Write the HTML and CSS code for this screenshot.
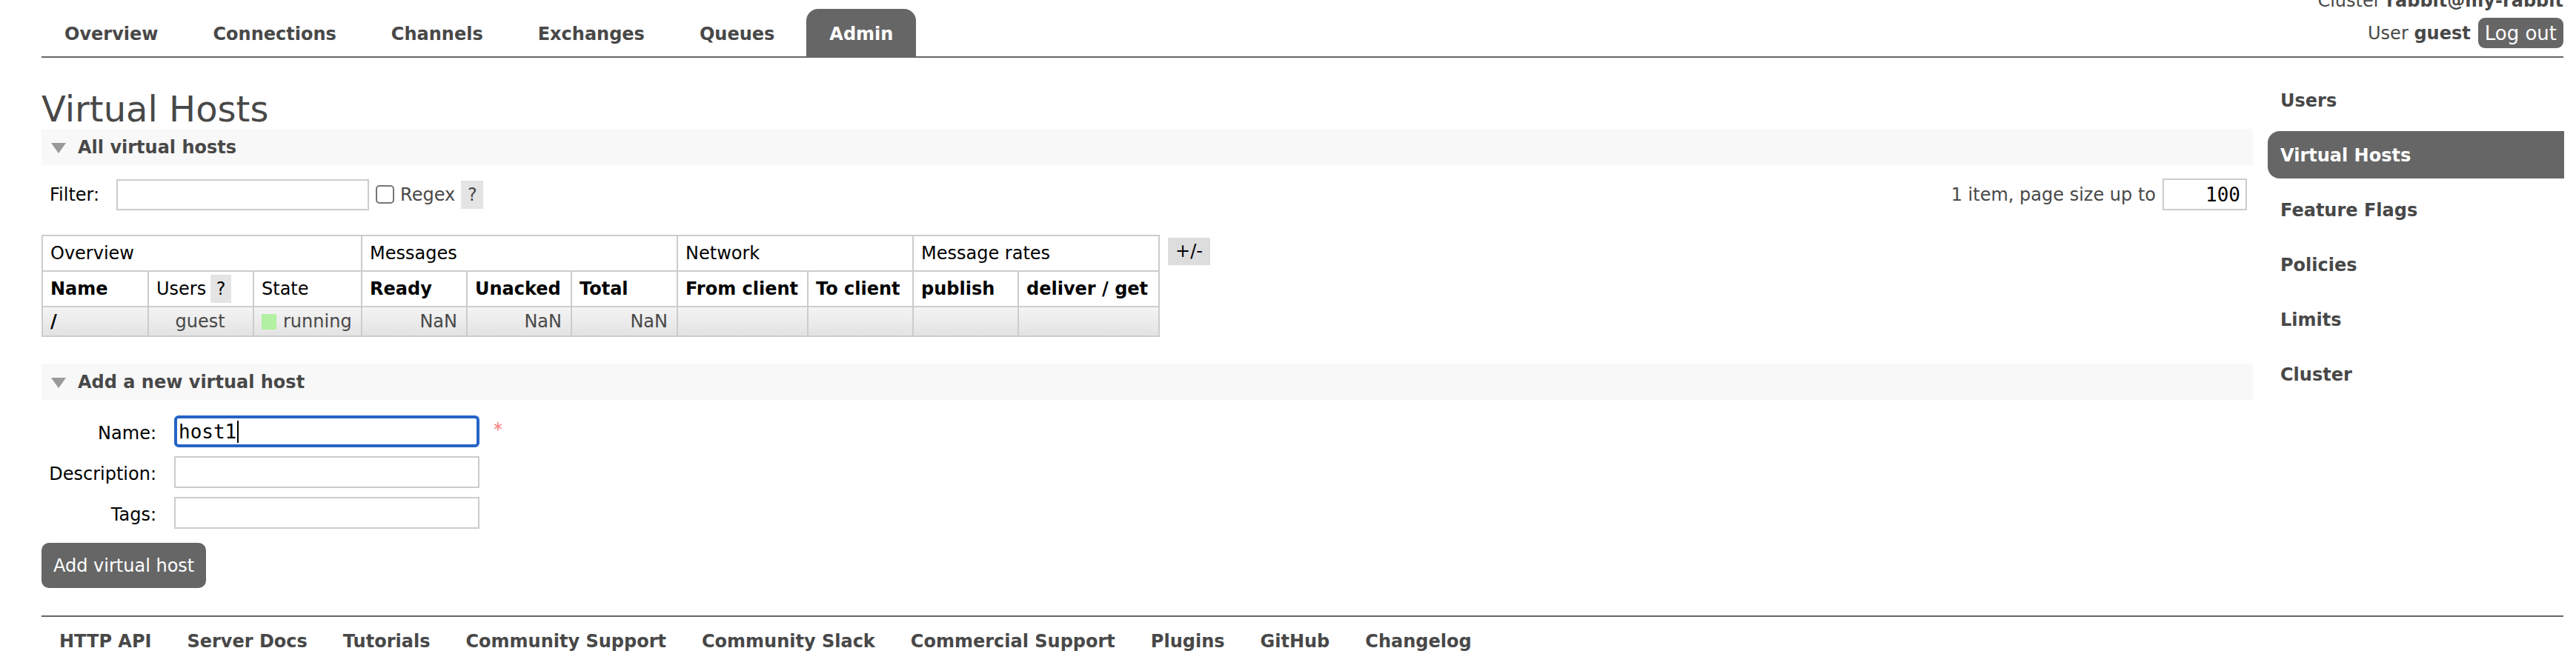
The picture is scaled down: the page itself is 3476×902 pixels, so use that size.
FILE: index.html
```html
<!DOCTYPE html>
<html lang="en">
<head>
<meta charset="utf-8">
<title>RabbitMQ Management</title>
<link rel="stylesheet" href="styles.css">
</head>
<body>
<div class="header">
  <ul class="menu">
    <li><a href="#">Overview</a></li>
    <li><a href="#">Connections</a></li>
    <li><a href="#">Channels</a></li>
    <li><a href="#">Exchanges</a></li>
    <li><a href="#">Queues</a></li>
    <li><a href="#" class="selected">Admin</a></li>
  </ul>
  <div class="topnav">
    <div class="tn-cluster">Cluster <b>rabbit@my-rabbit</b></div>
    <div class="tn-user"><span>User <b>guest</b></span><button class="logout" type="button">Log out</button></div>
  </div>
</div>

<div class="page">
  <div class="main">
    <h1 class="title">Virtual Hosts</h1>

    <div class="section">
      <h2 class="sec-title"><svg class="arrow" viewBox="0 0 20 14"><polygon points="0,0 20,0 10,14" fill="#999"/></svg>All virtual hosts</h2>
      <div class="filter-row">
        <div class="filter-left">
          <span class="lbl">Filter:</span>
          <input class="filter-input" type="text">
          <input class="chk" type="checkbox">
          <span>Regex</span>
          <span class="help">?</span>
        </div>
        <div class="filter-right">
          <span>1 item, page size up to</span>
          <input class="pagesize" type="text" value="100">
        </div>
      </div>

      <div class="table-wrap">
        <div class="vtable">
          <div class="c h span3">Overview</div>
          <div class="c h span3">Messages</div>
          <div class="c h span2">Network</div>
          <div class="c h span2">Message rates</div>

          <div class="c h b">Name</div>
          <div class="c h">Users <span class="help sm">?</span></div>
          <div class="c h">State</div>
          <div class="c h b">Ready</div>
          <div class="c h b">Unacked</div>
          <div class="c h b">Total</div>
          <div class="c h b">From client</div>
          <div class="c h b">To client</div>
          <div class="c h b">publish</div>
          <div class="c h b">deliver / get</div>

          <div class="c d name">/</div>
          <div class="c d center">guest</div>
          <div class="c d"><span class="state-box"></span>running</div>
          <div class="c d right">NaN</div>
          <div class="c d right">NaN</div>
          <div class="c d right">NaN</div>
          <div class="c d"></div>
          <div class="c d"></div>
          <div class="c d"></div>
          <div class="c d"></div>
        </div>
        <span class="plusminus">+/-</span>
      </div>
    </div>

    <div class="section section2">
      <h2 class="sec-title"><svg class="arrow" viewBox="0 0 20 14"><polygon points="0,0 20,0 10,14" fill="#999"/></svg>Add a new virtual host</h2>
      <div class="form">
        <div class="form-row">
          <label class="form-label">Name:</label>
          <span class="field-wrap">
            <input class="field focused" type="text" value="host1">
            <span class="caret"></span>
          </span>
          <span class="mand">*</span>
        </div>
        <div class="form-row">
          <label class="form-label">Description:</label>
          <input class="field" type="text">
        </div>
        <div class="form-row">
          <label class="form-label">Tags:</label>
          <input class="field" type="text">
        </div>
      </div>
      <button class="add-btn" type="button">Add virtual host</button>
    </div>
  </div>

  <ul class="rhs">
    <li><a href="#">Users</a></li>
    <li><a href="#" class="selected">Virtual Hosts</a></li>
    <li><a href="#">Feature Flags</a></li>
    <li><a href="#">Policies</a></li>
    <li><a href="#">Limits</a></li>
    <li><a href="#">Cluster</a></li>
  </ul>
</div>

<div class="footer">
  <ul class="foot-links">
    <li><a href="#">HTTP API</a></li>
    <li><a href="#">Server Docs</a></li>
    <li><a href="#">Tutorials</a></li>
    <li><a href="#">Community Support</a></li>
    <li><a href="#">Community Slack</a></li>
    <li><a href="#">Commercial Support</a></li>
    <li><a href="#">Plugins</a></li>
    <li><a href="#">GitHub</a></li>
    <li><a href="#">Changelog</a></li>
  </ul>
</div>
</body>
</html>
```
FILE: styles.css
```css
* { box-sizing: border-box; }
html, body { margin: 0; padding: 0; }
body {
  font-family: "DejaVu Sans", Verdana, sans-serif;
  font-size: 24px;
  color: #484848;
  background: #fff;
  overflow: hidden;
}
a { color: inherit; text-decoration: none; }
ul { list-style: none; margin: 0; padding: 0; }

/* header */
.header {
  display: flex;
  justify-content: space-between;
  align-items: flex-end;
  margin: 12px 17px 0 56px;
  border-bottom: 2px solid #666;
}
.menu { display: flex; }
.menu li { padding-right: 2px; }
.menu a {
  display: block;
  height: 64px;
  line-height: 60px;
  padding: 4px 31px 0;
  margin-right: 10px;
  font-weight: bold;
}
.menu a.selected {
  background: #666;
  color: #fff;
  border-radius: 16px 16px 0 0;
}
.topnav {
  margin-top: -25px;
  padding-bottom: 11px;
  text-align: right;
}
.tn-cluster { line-height: 28px; margin-bottom: 9px; }
.tn-user {
  display: flex;
  align-items: center;
  justify-content: flex-end;
  height: 41px;
  gap: 10px;
  line-height: 28px;
}
.logout {
  height: 41px;
  padding: 0 9px;
  border: 0;
  border-radius: 9px;
  background: #666;
  color: #fff;
  font-family: "DejaVu Sans", Verdana, sans-serif;
  font-size: 26px;
}

/* page */
.page { display: flex; align-items: flex-start; }
.main { flex: 1; min-width: 0; margin-left: 56px; padding-top: 42px; }
.title {
  margin: 0;
  font-size: 48px;
  font-weight: normal;
  line-height: 54px;
}
.sec-title {
  margin: 0;
  height: 49px;
  display: flex;
  align-items: center;
  padding-left: 13px;
  background: #f8f8f8;
  font-size: 24px;
  font-weight: bold;
}
.arrow { width: 20px; height: 14px; margin-right: 16px; margin-top: 3px; }

.filter-row {
  display: flex;
  justify-content: space-between;
  align-items: center;
  height: 43px;
  margin-top: 18px;
  padding: 0 8px 0 11px;
}
.filter-left, .filter-right { display: flex; align-items: center; }
.lbl { color: #000; }
.filter-input {
  width: 341px;
  height: 42px;
  margin: 0 0 0 23px;
  border: 2px solid #ccc;
}
.chk {
  appearance: none;
  -webkit-appearance: none;
  width: 25px;
  height: 25px;
  margin: 0 8px 0 9px;
  border: 2px solid #767676;
  border-radius: 5px;
  background: #fff;
}
.help {
  display: inline-block;
  width: 30px;
  height: 38px;
  line-height: 38px;
  margin-left: 8px;
  text-align: center;
  background: #e4e4e4;
}
.help.sm { width: 28px; margin-left: 6px; }
.pagesize {
  width: 114px;
  height: 43px;
  margin-left: 9px;
  padding: 0 7px 0 4px;
  border: 2px solid #ccc;
  text-align: right;
  font-family: "DejaVu Sans Mono", monospace;
  font-size: 26px;
  color: #000;
}

/* table */
.table-wrap {
  display: flex;
  align-items: flex-start;
  gap: 11px;
  margin-top: 33px;
}
.vtable {
  display: grid;
  grid-template-columns: 143px 142px 146px 142px 141px 143px 176px 142px 142px 190px;
  grid-template-rows: 48px 48px 40px;
  border-right: 2px solid #ccc;
  border-bottom: 2px solid #ccc;
}
.c {
  border-left: 2px solid #ccc;
  border-top: 2px solid #ccc;
  padding: 0 12px 0 10px;
  white-space: nowrap;
  overflow: hidden;
  display: flex;
  align-items: center;
}
.span3 { grid-column: span 3; }
.span2 { grid-column: span 2; }
.h { color: #000; }
.b { font-weight: bold; }
.d { background: linear-gradient(#f4f4f4, #e3e3e3); }
.d.name { color: #000; font-weight: bold; }
.d.center { justify-content: center; }
.d.right { justify-content: flex-end; }
.state-box {
  display: inline-block;
  width: 20px;
  height: 21px;
  margin-right: 9px;
  background: #b2f0a2;
}
.plusminus {
  display: inline-block;
  width: 57px;
  height: 37px;
  line-height: 37px;
  margin-top: 4px;
  text-align: center;
  background: #ddd;
  color: #000;
}

/* add vhost */
.section2 { margin-top: 36px; }
.form {
  display: flex;
  flex-direction: column;
  gap: 12px;
  margin-top: 21px;
}
.form-row { display: flex; align-items: center; height: 43px; }
.form-label {
  width: 155px;
  padding-top: 5px;
  text-align: right;
  color: #000;
  margin-right: 24px;
}
.field {
  width: 412px;
  height: 43px;
  margin: 0;
  padding: 0 4px;
  border: 2px solid #ccc;
  font-family: "DejaVu Sans Mono", monospace;
  font-size: 26px;
  color: #000;
}
.field.focused {
  border: 4px solid #2563c8;
  border-radius: 6px;
  padding: 0 2px;
  outline: none;
}
.field-wrap { position: relative; display: inline-block; height: 43px; }
.caret {
  position: absolute;
  left: 85px;
  top: 7px;
  width: 2px;
  height: 30px;
  background: #000;
}
.mand { color: #f77; margin-left: 19px; margin-top: -6px; }
.add-btn {
  display: block;
  height: 61px;
  margin-top: 19px;
  padding: 0 16px;
  border: 0;
  border-radius: 10px;
  background: #666;
  color: #fff;
  font-family: "DejaVu Sans", Verdana, sans-serif;
  font-size: 24px;
}

/* right-hand menu */
.rhs { width: 400px; margin: 25px 16px 0 20px; }
.rhs li { margin-bottom: 10px; }
.rhs a {
  display: block;
  height: 64px;
  line-height: 61px;
  padding: 3px 17px 0;
  font-weight: bold;
}
.rhs a.selected {
  background: #666;
  color: #fff;
  border-radius: 16px 0 0 16px;
}

/* footer */
.footer {
  margin: 37px 17px 0 56px;
  border-top: 2px solid #666;
}
.foot-links { display: flex; padding-top: 19px; }
.foot-links a {
  display: block;
  padding: 0 24px;
  line-height: 28px;
  font-weight: bold;
}
```
